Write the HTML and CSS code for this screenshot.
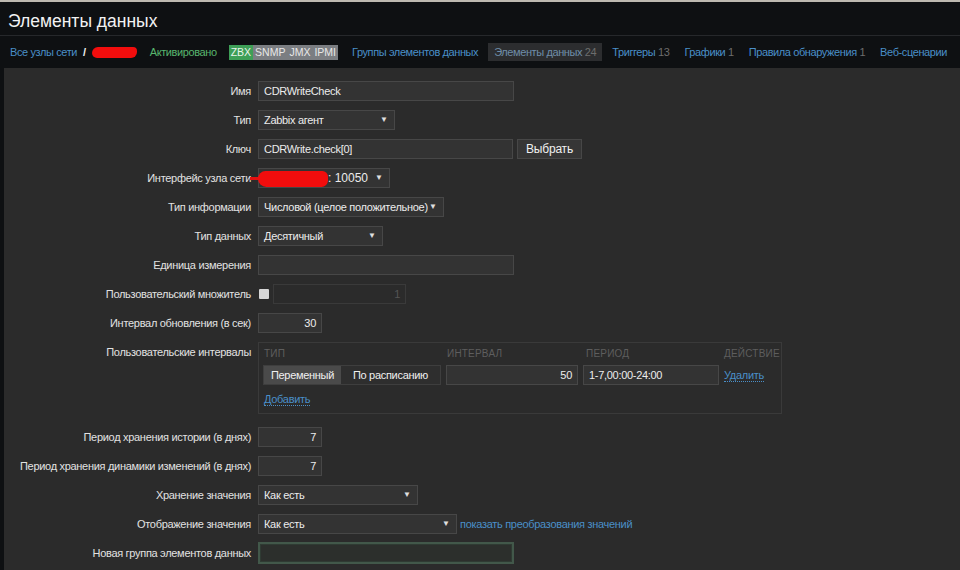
FILE: index.html
```html
<!DOCTYPE html>
<html lang="ru">
<head>
<meta charset="utf-8">
<title>Элементы данных</title>
<link rel="stylesheet" href="styles.css">
</head>
<body>
<div class="topline"></div>
<header class="page-header"><h1>Элементы данных</h1></header>
<nav class="host-nav">
  <div class="crumbs">
    <a class="link" href="#">Все узлы сети</a>
    <span class="slash">/</span>
    <span class="redact"></span>
  </div>
  <span class="status">Активировано</span>
  <div class="badges">
    <span class="badge on">ZBX</span><span class="badge">SNMP</span><span class="badge">JMX</span><span class="badge">IPMI</span>
  </div>
  <ul class="tabs">
    <li><a class="link" href="#">Группы элементов данных</a></li>
    <li class="active"><a href="#">Элементы данных</a> <span class="count">24</span></li>
    <li><a class="link" href="#">Триггеры</a> <span class="count">13</span></li>
    <li><a class="link" href="#">Графики</a> <span class="count">1</span></li>
    <li><a class="link" href="#">Правила обнаружения</a> <span class="count">1</span></li>
    <li><a class="link" href="#">Веб-сценарии</a></li>
  </ul>
</nav>
<main class="form-wrap">
  <div class="form">
    <label class="lbl">Имя</label>
    <div class="field"><div class="input w256">CDRWriteCheck</div></div>

    <label class="lbl">Тип</label>
    <div class="field"><div class="select w137"><span>Zabbix агент</span><span class="arrow">▼</span></div></div>

    <label class="lbl">Ключ</label>
    <div class="field"><div class="input w255">CDRWrite.check[0]</div><button class="btn">Выбрать</button></div>

    <label class="lbl">Интерфейс узла сети</label>
    <div class="field iface">
      <div class="select w132"><span class="ip">: 10050</span><span class="arrow">▼</span></div>
      <span class="redact-line"></span><span class="redact-blob"></span>
    </div>

    <label class="lbl">Тип информации</label>
    <div class="field"><div class="select w186"><span>Числовой (целое положительное)</span><span class="arrow">▼</span></div></div>

    <label class="lbl">Тип данных</label>
    <div class="field"><div class="select w125"><span>Десятичный</span><span class="arrow">▼</span></div></div>

    <label class="lbl">Единица измерения</label>
    <div class="field"><div class="input w256"></div></div>

    <label class="lbl">Пользовательский множитель</label>
    <div class="field"><span class="checkbox"></span><div class="input w133 disabled num">1</div></div>

    <label class="lbl">Интервал обновления (в сек)</label>
    <div class="field"><div class="input w64 num">30</div></div>

    <label class="lbl top">Пользовательские интервалы</label>
    <div class="field intervals-row">
      <div class="intervals">
        <div class="ih">Тип</div>
        <div class="ih">Интервал</div>
        <div class="ih">Период</div>
        <div class="ih">Действие</div>
        <div class="radio">
          <span class="opt sel">Переменный</span><span class="opt">По расписанию</span>
        </div>
        <div class="input num">50</div>
        <div class="input">1-7,00:00-24:00</div>
        <div><a class="dlink" href="#">Удалить</a></div>
        <div class="add"><a class="dlink" href="#">Добавить</a></div>
      </div>
    </div>

    <label class="lbl">Период хранения истории (в днях)</label>
    <div class="field"><div class="input w64 num">7</div></div>

    <label class="lbl">Период хранения динамики изменений (в днях)</label>
    <div class="field"><div class="input w64 num">7</div></div>

    <label class="lbl">Хранение значения</label>
    <div class="field"><div class="select w160"><span>Как есть</span><span class="arrow">▼</span></div></div>

    <label class="lbl">Отображение значения</label>
    <div class="field"><div class="select w199"><span>Как есть</span><span class="arrow">▼</span></div><a class="link small" href="#">показать преобразования значений</a></div>

    <label class="lbl">Новая группа элементов данных</label>
    <div class="field"><div class="input w256 focus"></div></div>
  </div>
</main>
</body>
</html>
```

FILE: styles.css
```css
* { box-sizing: border-box; }
html, body { margin: 0; padding: 0; }
body {
  background: #0e1012;
  color: #e6e6e6;
  font-family: "Liberation Sans", Arial, sans-serif;
  font-size: 11px;
  letter-spacing: -0.3px;
  overflow: hidden;
  height: 570px;
}
a { text-decoration: none; }
.topline { height: 2px; background: #bdb9b0; }

.page-header {
  padding: 9px 8px 4px;
  border-bottom: 1px solid #26282b;
}
.page-header h1 {
  margin: 0;
  font-size: 17.5px;
  font-weight: normal;
  letter-spacing: 0;
  line-height: 20px;
  color: #f2f2f2;
}

.host-nav {
  height: 32px;
  display: flex;
  align-items: center;
  padding-left: 10px;
  white-space: nowrap;
  letter-spacing: -0.4px;
}
.link { color: #4a8fc8; }
.crumbs { display: flex; align-items: center; gap: 6px; }
.slash { color: #f2f2f2; font-weight: bold; }
.redact {
  display: inline-block;
  width: 45px;
  height: 11px;
  background: #f20d0d;
  border-radius: 6px 4px 6px 5px;
}
.status { margin-left: 13px; color: #59b56e; }
.badges { margin-left: 12px; display: flex; }
.badge {
  display: inline-block;
  padding: 0 2px;
  height: 15px;
  line-height: 15px;
  font-size: 10.5px;
  letter-spacing: 0;
  background: #7b7e82;
  color: #e8e8e8;
}
.badge.on { background: #3e9f57; color: #eaf5ec; }
.tabs {
  list-style: none;
  margin: 0 0 0 9px;
  padding: 0;
  display: flex;
  gap: 5px;
}
.tabs li {
  padding: 0 5px;
  height: 18px;
  line-height: 18px;
}
.tabs li.active { background: #2c2d2f; padding: 0 6px; }
.tabs li.active a { color: #6f8ea9; }
.count { color: #6d6d6d; }

.form-wrap {
  margin-left: 4px;
  background: #2b2b2b;
  height: 520px;
  padding-top: 13px;
}
.form {
  display: grid;
  grid-template-columns: 247px 1fr;
  column-gap: 7px;
  row-gap: 9px;
  align-items: center;
}
.lbl {
  text-align: right;
  white-space: nowrap;
  color: #e2e2e2;
}
.lbl.top { align-self: start; padding-top: 4px; }
.field {
  display: flex;
  align-items: center;
  gap: 4px;
  height: 20px;
}
.input, .select {
  height: 20px;
  line-height: 18px;
  background: #333333;
  border: 1px solid #474747;
  color: #ececec;
  padding: 0 5px;
  white-space: nowrap;
  font-size: 11px;
}
.input.num { text-align: right; }
.input.disabled { background: #2b2b2b; border-color: #3a3a3a; color: #555; }
.input.focus {
  height: 22px;
  background: #2c2f2c;
  border: 2px solid #42584a;
  box-shadow: inset 0 0 0 1px #2f3b33;
}
.select { display: flex; justify-content: space-between; align-items: center; }
.arrow { font-size: 8px; color: #e0e0e0; margin-right: 1px; letter-spacing: 0; }
.w64 { width: 64px; }
.w125 { width: 125px; }
.w132 { width: 132px; }
.w133 { width: 133px; }
.w137 { width: 137px; }
.w160 { width: 160px; }
.w186 { width: 186px; }
.w199 { width: 199px; }
.w255 { width: 255px; }
.w256 { width: 256px; }

.btn {
  height: 20px;
  width: 65px;
  background: #363636;
  border: 1px solid #474747;
  color: #f0f0f0;
  font-family: "Liberation Sans", Arial, sans-serif;
  font-size: 12px;
  letter-spacing: -0.2px;
  padding: 0;
}
.checkbox {
  width: 10px;
  height: 10px;
  background: #d6d6d6;
  border-radius: 1px;
  margin-left: 1px;
}
.iface { position: relative; }
.ip { padding-left: 64px; font-size: 12px; letter-spacing: 0; }
.redact-line {
  position: absolute;
  left: -8px;
  top: 9px;
  width: 14px;
  height: 3px;
  background: #e41010;
}
.redact-blob {
  position: absolute;
  left: 0;
  top: 3px;
  width: 70px;
  height: 16px;
  background: #f20d0d;
  border-radius: 8px 6px 7px 9px;
}

.intervals-row { height: auto; margin-bottom: 4px; }
.intervals {
  width: 524px;
  border: 1px solid #3a3a3a;
  padding: 5px 4px 8px 4px;
  display: grid;
  grid-template-columns: 178px 132px 136px auto;
  column-gap: 5px;
  row-gap: 5px;
  align-items: center;
}
.ih {
  font-size: 10px;
  text-transform: uppercase;
  letter-spacing: 0.2px;
  color: #5e5e5e;
  padding-left: 1px;
  height: 12px;
  line-height: 12px;
}
.ih:nth-child(3) { padding-left: 3px; }
.ih:nth-child(4) { padding-left: 0; }
.radio {
  display: flex;
  height: 20px;
  border: 1px solid #3e3e3e;
}
.opt {
  flex: 1;
  text-align: center;
  line-height: 18px;
  color: #f0f0f0;
  font-size: 11px;
  background: #2e2e2e;
}
.opt.sel { flex: 0 0 77px; background: #4a4a4a; }
.dlink {
  color: #4a8fc8;
  border-bottom: 1px dotted #4a8fc8;
}
.add { grid-column: 1 / -1; padding-left: 1px; padding-top: 3px; }
.small { margin-left: -1px; }
```
